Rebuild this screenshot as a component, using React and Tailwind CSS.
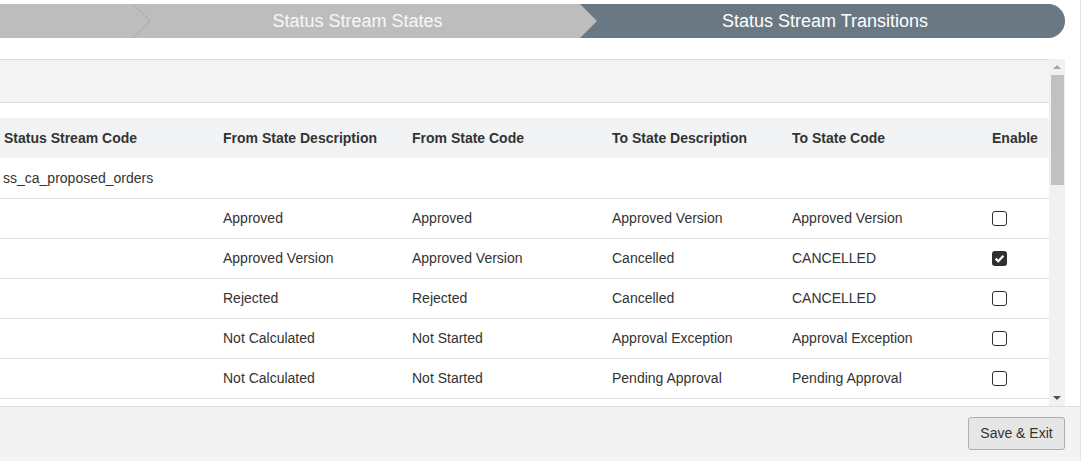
import React from "react";

const rows = [
  { from: "Approved", fromCode: "Approved", to: "Approved Version", toCode: "Approved Version", on: false },
  { from: "Approved Version", fromCode: "Approved Version", to: "Cancelled", toCode: "CANCELLED", on: true },
  { from: "Rejected", fromCode: "Rejected", to: "Cancelled", toCode: "CANCELLED", on: false },
  { from: "Not Calculated", fromCode: "Not Started", to: "Approval Exception", toCode: "Approval Exception", on: false },
  { from: "Not Calculated", fromCode: "Not Started", to: "Pending Approval", toCode: "Pending Approval", on: false },
];

const cols = "grid grid-cols-[219px_189px_200px_180px_200px_1fr]";

function Check({ on }) {
  if (on) {
    return (
      <span className="flex h-[15px] w-[15px] items-center justify-center rounded-[3px] bg-[#2f2f2f]">
        <svg width="11" height="11" viewBox="0 0 11 11">
          <path d="M1.6 5.6 L4.3 8.2 L9.4 2.8" fill="none" stroke="#fff" strokeWidth="2.2" />
        </svg>
      </span>
    );
  }
  return <span className="block h-[15px] w-[15px] rounded-[3px] border border-[#2f2f2f] bg-white" />;
}

export default function App() {
  return (
    <div className="flex h-[461px] w-[1086px] overflow-hidden bg-white font-['Liberation_Sans',Arial,sans-serif] text-[#333]">
      <div className="flex w-[1081px] flex-col border-r border-[#e3e3e3]">
        {/* Wizard steps */}
        <div className="flex pt-[4px] pr-[15px]">
          <div className="flex h-[34px] flex-1 rounded-r-[17px] bg-[#bdbdbd]">
            <div className="w-[133px]" />
            <div className="relative flex flex-1 items-center justify-center pl-[2px] text-[18px] text-[#f7f7f7]">
              <svg className="absolute left-0 top-0" width="20" height="34" viewBox="0 0 20 34">
                <polyline points="0,0 17,17 0,34" fill="none" stroke="#a9a9a9" strokeWidth="1" />
              </svg>
              Status Stream States
            </div>
            <div className="flex w-[485px] items-center justify-center rounded-r-[17px] bg-[#6a7883] pl-[5px] text-[18px] text-white [clip-path:polygon(0_0,100%_0,100%_100%,0_100%,17px_50%)]">
              Status Stream Transitions
            </div>
          </div>
        </div>

        <div className="h-[21px]" />

        {/* Scroll area */}
        <div className="flex h-[347px] pr-[15px]">
          <div className="flex-1">
            <div className="h-[44px] border-y border-[#dcdcdc] bg-[#f4f4f4]" />
            <div className="h-[15px]" />
            <div className={`${cols} h-[40px] items-center bg-[#f2f3f5] text-[14px] font-bold`}>
              <div className="pl-[4px]">Status Stream Code</div>
              <div className="pl-[4px]">From State Description</div>
              <div className="pl-[4px]">From State Code</div>
              <div className="pl-[4px]">To State Description</div>
              <div className="pl-[4px]">To State Code</div>
              <div className="pl-[4px]">Enable</div>
            </div>
            <div className={`${cols} h-[41px] items-center border-b border-[#dedede] text-[14px]`}>
              <div className="pl-[3px]">ss_ca_proposed_orders</div>
            </div>
            {rows.map((r, i) => (
              <div key={i} className={`${cols} h-[40px] items-center border-b border-[#dedede] text-[14px]`}>
                <div />
                <div className="pl-[4px]">{r.from}</div>
                <div className="pl-[4px]">{r.fromCode}</div>
                <div className="pl-[4px]">{r.to}</div>
                <div className="pl-[4px]">{r.toCode}</div>
                <div className="pl-[4px]">
                  <Check on={r.on} />
                </div>
              </div>
            ))}
          </div>
          {/* Scrollbar */}
          <div className="flex w-[16px] flex-col items-center bg-[#f1f1f1] pt-[1px]">
            <div className="flex h-[15px] items-center">
              <svg width="8" height="5" viewBox="0 0 8 5">
                <polygon points="0,4 4,0 8,4" fill="#a3a3a3" />
              </svg>
            </div>
            <div className="h-[110px] w-[13px] bg-[#c1c1c1]" />
            <div className="flex-1" />
            <div className="flex h-[15px] items-center">
              <svg width="8" height="5" viewBox="0 0 8 5">
                <polygon points="0,0 8,0 4,4" fill="#505050" />
              </svg>
            </div>
          </div>
        </div>

        {/* Footer */}
        <div className="flex flex-1 items-start justify-end border-t border-[#dcdcdc] bg-[#f3f3f3] pr-[15px] pt-[10px]">
          <button className="h-[33px] w-[97px] rounded-[3px] border border-[#adadad] bg-[#e6e6e6] text-[14px] text-[#333] font-['Liberation_Sans',Arial,sans-serif]">
            Save &amp; Exit
          </button>
        </div>
      </div>
    </div>
  );
}
